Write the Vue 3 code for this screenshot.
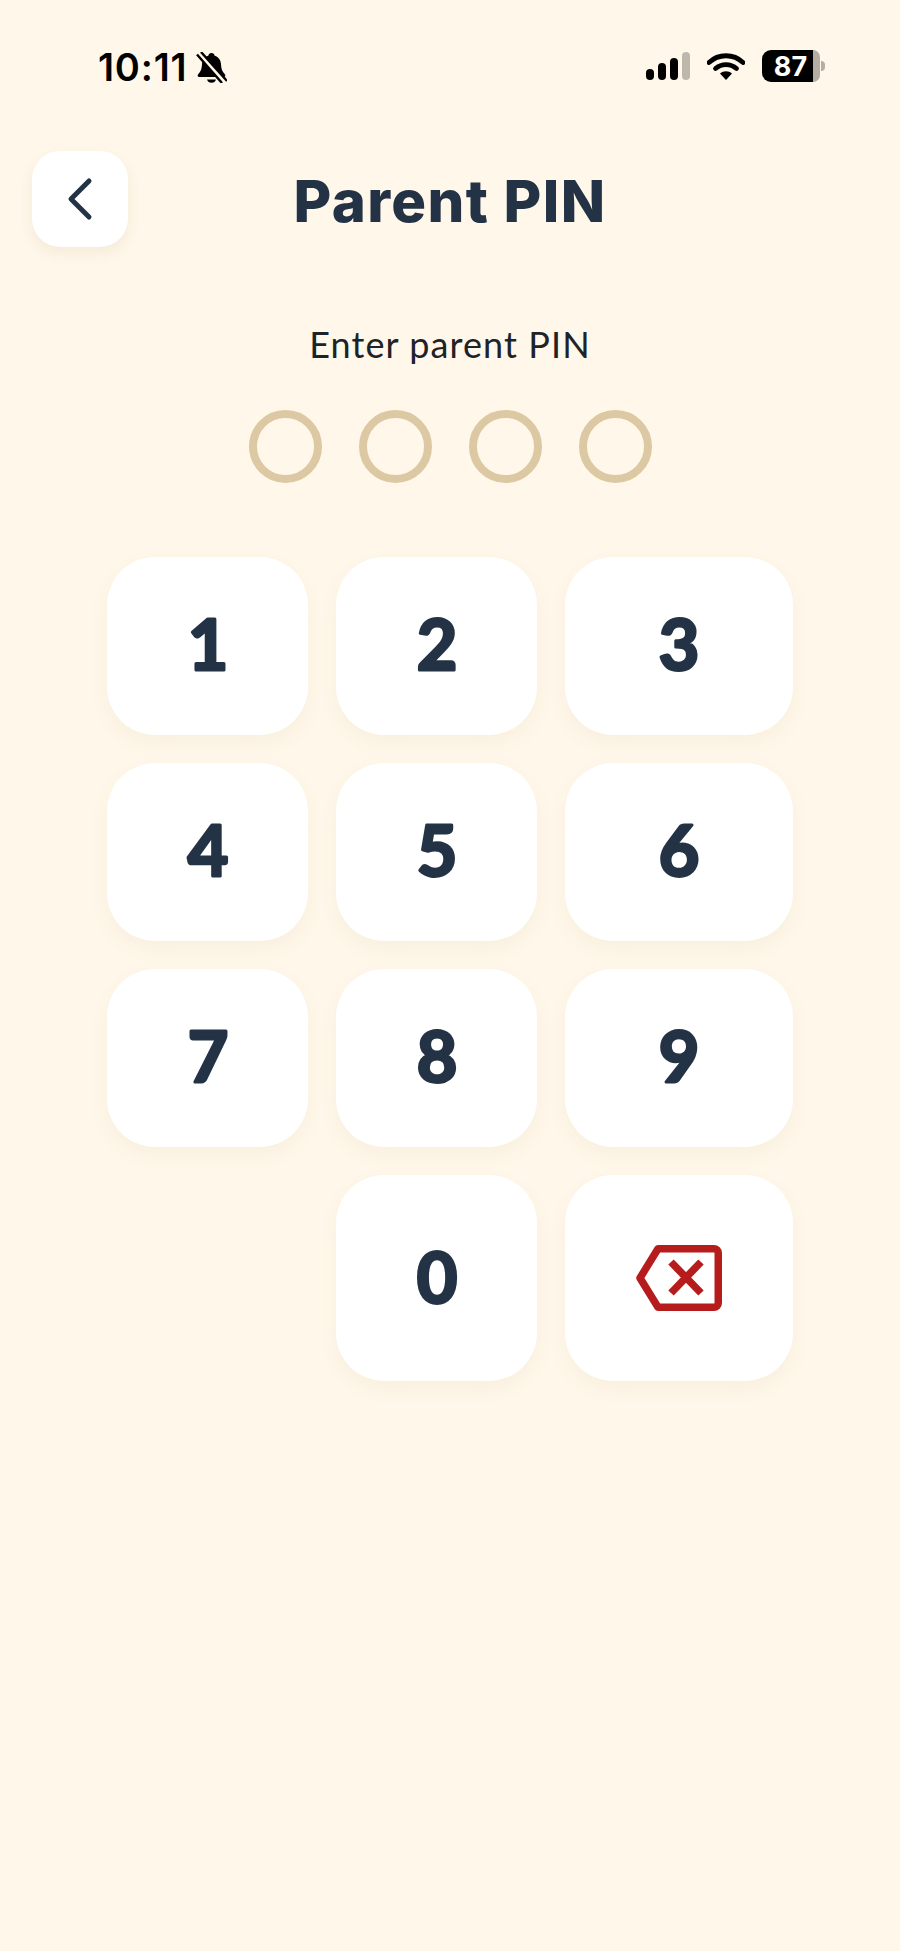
<template>
  <div class="screen">
    <!-- Status bar -->
    <div class="status-bar">
      <div class="status-left">
        <span class="time">10:11</span>
        <svg class="bell" viewBox="0 0 31 31" width="31" height="31">
          <path d="M15.500 1c1.800 0 3 1.200 3.200 2.800 4 1.200 6 4.400 6.300 8.500.2 4 .8 7 4 10.200.8 1.200.2 2.500-1.200 2.500H3.200c-1.400 0-2-1.300-1.200-2.500 3.200-3.200 3.800-6.200 4-10.200.3-4.100 2.300-7.300 6.300-8.500C12.500 2.200 13.700 1 15.500 1z" fill="#000" />
          <path d="M11 27.500h9c-.4 2-2.200 3.300-4.500 3.300S11.400 29.500 11 27.500z" fill="#000" />
          <path d="M3 0l26 31" stroke="#fff7e9" stroke-width="5" />
          <path d="M1 2.500l25 28.500" stroke="#000" stroke-width="2.400" />
          <path d="M5 0l26 29" stroke="#000" stroke-width="2.400" />
        </svg>
      </div>
      <div class="status-right">
        <div class="signal">
          <span class="bar" v-for="b in signalBars" :key="b.h" :class="{ off: b.off }" :style="{ height: b.h + 'px' }"></span>
        </div>
        <svg class="wifi" viewBox="0 0 38 28" width="38" height="28">
          <path d="M2 10.500C11.500 1.500 26.500 1.500 36 10.500" fill="none" stroke="#000" stroke-width="4.800" stroke-linecap="round" />
          <path d="M8.500 16.500C14.500 11.200 23.500 11.200 29.500 16.500" fill="none" stroke="#000" stroke-width="4.800" stroke-linecap="round" />
          <path d="M13 21.500c3.500-3 8.500-3 12 0L19 28z" fill="#000" />
        </svg>
        <div class="battery">
          <div class="battery-body"><span>87</span></div>
          <div class="battery-rest"></div>
          <div class="battery-nub"></div>
        </div>
      </div>
    </div>

    <!-- Cabecera -->
    <div class="header">
      <button class="back-button">
        <svg viewBox="0 0 26 44" width="26" height="44">
          <path d="M22 4L4 22l18 18" fill="none" stroke="#233345" stroke-width="5" stroke-linecap="round" stroke-linejoin="round" />
        </svg>
      </button>
      <h1 class="title">Parent PIN</h1>
    </div>

    <p class="prompt">Enter parent PIN</p>

    <div class="dots">
      <span v-for="n in 4" :key="n" class="dot"></span>
    </div>

    <!-- Teclado -->
    <div class="keypad">
      <button v-for="n in digits" :key="n" class="key">
        <svg class="digit" viewBox="0 0 100 100" width="100" height="100">
          <text x="50" y="74" text-anchor="middle">{{ n }}</text>
        </svg>
      </button>
      <div class="key-spacer"></div>
      <button class="key tall">
        <svg class="digit" viewBox="0 0 100 100" width="100" height="100">
          <text x="50" y="75" text-anchor="middle">0</text>
        </svg>
      </button>
      <button class="key tall">
        <svg viewBox="0 0 86 66" width="86" height="66">
          <path d="M22 3.750H78a4.250 4.250 0 0 1 4.250 4.250V58a4.250 4.250 0 0 1-4.250 4.250H22L4 33z" fill="none" stroke="#b71c1c" stroke-width="7.500" stroke-linejoin="round" />
          <path d="M35 17l30 31M65 17L35 48" fill="none" stroke="#b71c1c" stroke-width="7.500" />
        </svg>
      </button>
    </div>
  </div>
</template>

<script setup>
const digits = [1, 2, 3, 4, 5, 6, 7, 8, 9]

const signalBars = [
  { h: 11 },
  { h: 17 },
  { h: 22 },
  { h: 28, off: true }
]
</script>

<style scoped>
.screen {
  width: 900px;
  min-height: 1951px;
  background-color: #fff7e9;
  display: flex;
  flex-direction: column;
  align-items: center;
  font-family: "Lato", "Noto Sans", sans-serif;
}

.status-bar {
  width: 100%;
  height: 151px;
  box-sizing: border-box;
  padding: 50px 75px 0 98px;
  display: flex;
  justify-content: space-between;
  align-items: flex-start;
}

.status-left {
  display: flex;
  align-items: center;
  gap: 9px;
  height: 34px;
}

.time {
  font-family: "Inter", sans-serif;
  font-size: 38px;
  font-weight: 600;
  letter-spacing: 0.8px;
  color: #000;
}

.status-right {
  display: flex;
  align-items: center;
  height: 32px;
}

.signal {
  display: flex;
  align-items: flex-end;
  gap: 4px;
  height: 28px;
  margin-right: 17px;
}

.bar {
  width: 8px;
  border-radius: 4px;
  background-color: #000;
}

.bar.off {
  background-color: #bdb7ac;
}

.wifi {
  margin-right: 17px;
}

.battery {
  display: flex;
  align-items: center;
}

.battery-body {
  width: 51px;
  height: 32px;
  box-sizing: border-box;
  padding-left: 6px;
  background-color: #000;
  border-radius: 9px 0 0 9px;
  display: flex;
  align-items: center;
  justify-content: center;
  color: #fff;
  font-family: "Inter", sans-serif;
  font-size: 27px;
  font-weight: 700;
}

.battery-rest {
  width: 7px;
  height: 32px;
  background-color: #b3ada2;
  border-radius: 0 8px 8px 0;
}

.battery-nub {
  width: 4px;
  height: 10px;
  margin-left: 1px;
  background-color: #b3ada2;
  border-radius: 0 5px 5px 0;
}

.header {
  width: 100%;
  box-sizing: border-box;
  padding: 0 32px;
  display: grid;
  grid-template-columns: 96px 1fr 96px;
  align-items: center;
}

.back-button {
  width: 96px;
  height: 96px;
  border: none;
  padding: 0;
  border-radius: 28px;
  background-color: #fff;
  box-shadow: 0 6px 14px rgba(120, 90, 40, 0.08);
  display: flex;
  align-items: center;
  justify-content: center;
}

.title {
  margin: 0;
  padding-top: 5px;
  text-align: center;
  font-family: "Inter", sans-serif;
  font-size: 58px;
  font-weight: 800;
  letter-spacing: 1.400px;
  line-height: 91px;
  color: #233345;
}

.prompt {
  margin: 73px 0 0;
  font-size: 36px;
  font-weight: 400;
  letter-spacing: 1.100px;
  line-height: 48px;
  color: #1e2328;
}

.dots {
  display: flex;
  gap: 37px;
  margin-top: 42px;
}

.dot {
  width: 73px;
  height: 73px;
  box-sizing: border-box;
  border: 8px solid #dcc9a3;
  border-radius: 50%;
}

.keypad {
  margin-top: 74px;
  display: grid;
  grid-template-columns: 201px 201px 228px;
  grid-auto-rows: 178px;
  gap: 28px;
}

.key {
  border: none;
  padding: 0;
  border-radius: 48px;
  background-color: #fff;
  box-shadow: 0 8px 20px rgba(120, 90, 40, 0.05);
  display: flex;
  align-items: center;
  justify-content: center;
}

.key.tall {
  height: 206px;
}

.digit text {
  font-family: "Lato", "Noto Sans", sans-serif;
  font-size: 70px;
  font-weight: 700;
  fill: #233345;
  stroke: #233345;
  stroke-width: 3px;
  stroke-linejoin: round;
}
</style>
